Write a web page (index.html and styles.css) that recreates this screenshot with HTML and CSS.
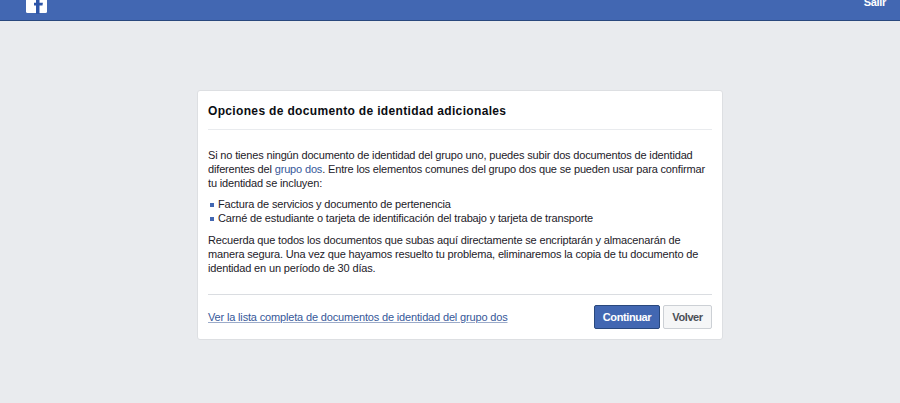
FILE: index.html
```html
<!DOCTYPE html>
<html lang="es">
<head>
<meta charset="utf-8">
<title>Opciones de documento de identidad adicionales</title>
<link rel="stylesheet" href="styles.css">
</head>
<body>
<header class="topbar">
  <svg class="logo" viewBox="0 0 21 14" width="21" height="14" aria-label="Facebook"><path class="logo-bg" d="M0 0h21v11.500a1.500 1.500 0 0 1-1.500 1.500H1.500A1.500 1.500 0 0 1 0 11.500z"/><path class="logo-f" d="M13.500 14V5.500h3l.4-2.700h-3.400V0h-3.500v2.800H8v2.700h2V14z"/></svg>
  <a class="exit" href="#">Salir</a>
</header>
<main class="page">
  <section class="card">
    <h1 class="title">Opciones de documento de identidad adicionales</h1>
    <div class="body">
      <p class="para">Si no tienes ningún documento de identidad del grupo uno, puedes subir dos documentos de identidad diferentes del <a class="inline-link" href="#">grupo dos</a>. Entre los elementos comunes del grupo dos que se pueden usar para confirmar tu identidad se incluyen:</p>
      <ul class="list">
        <li class="item">Factura de servicios y documento de pertenencia</li>
        <li class="item">Carné de estudiante o tarjeta de identificación del trabajo y tarjeta de transporte</li>
      </ul>
      <p class="para">Recuerda que todos los documentos que subas aquí directamente se encriptarán y almacenarán de manera segura. Una vez que hayamos resuelto tu problema, eliminaremos la copia de tu documento de identidad en un período de 30 días.</p>
    </div>
    <footer class="actions">
      <a class="more" href="#">Ver la lista completa de documentos de identidad del grupo dos</a>
      <div class="buttons">
        <button class="btn primary">Continuar</button>
        <button class="btn secondary">Volver</button>
      </div>
    </footer>
  </section>
</main>
</body>
</html>
```
FILE: styles.css
```css
* { box-sizing: border-box; }
html, body { margin: 0; height: 100%; }
body {
  background: #e9ebee;
  font-family: "Liberation Sans", Arial, sans-serif;
  font-size: 11px;
  line-height: 14px;
  letter-spacing: -.16px;
  color: #1d2129;
  overflow: hidden;
}
.topbar {
  height: 21px;
  background: #4267b2;
  border-bottom: 1px solid #29487d;
  display: flex;
  justify-content: space-between;
  align-items: flex-start;
  padding: 0 14px 0 26px;
}
.logo { display: block; }
.logo-bg { fill: #fff; }
.logo-f { fill: #2d55a8; }
.exit {
  color: #fff;
  font-weight: bold;
  font-size: 11px;
  line-height: 13px;
  letter-spacing: -.3px;
  margin-top: -4px;
  text-decoration: none;
}
.page { display: flex; justify-content: flex-start; padding: 69px 0 0 197px; }
.card {
  width: 526px;
  height: 250px;
  background: #fff;
  border: 1px solid #dddfe2;
  border-radius: 3px;
  padding: 0 10px;
}
.title {
  margin: 0;
  height: 39px;
  padding-top: 12px;
  border-bottom: 1px solid #e9ebee;
  font-size: 12px;
  line-height: 17px;
  font-weight: bold;
  letter-spacing: .34px;
  color: #0b0d12;
}
.body { padding-top: 18px; }
.para { margin: 0; }
.inline-link { color: #365899; text-decoration: none; }
.list {
  margin: 7px 0 8px;
  padding: 0 0 0 10px;
  list-style: none;
}
.item::before {
  content: "";
  display: inline-block;
  width: 4px;
  height: 4px;
  margin: 0 4px 1px -8px;
  background: #4267b2;
}
.actions {
  margin-top: 19px;
  border-top: 1px solid #dadde1;
  display: flex;
  justify-content: space-between;
  align-items: center;
  padding-top: 10px;
}
.more { color: #365899; text-decoration: underline; text-decoration-color: #9cabc9; }
.buttons { display: flex; gap: 3px; }
.btn {
  height: 24px;
  font: bold 11px/22px "Liberation Sans", Arial, sans-serif;
  letter-spacing: -.4px;
  border-radius: 2px;
  padding: 0;
}
.primary { width: 66px; background: #4267b2; border: 1px solid #29487d; color: #fff; }
.secondary { width: 49px; background: #f5f6f7; border: 1px solid #ccd0d5; color: #4b4f56; }
```
